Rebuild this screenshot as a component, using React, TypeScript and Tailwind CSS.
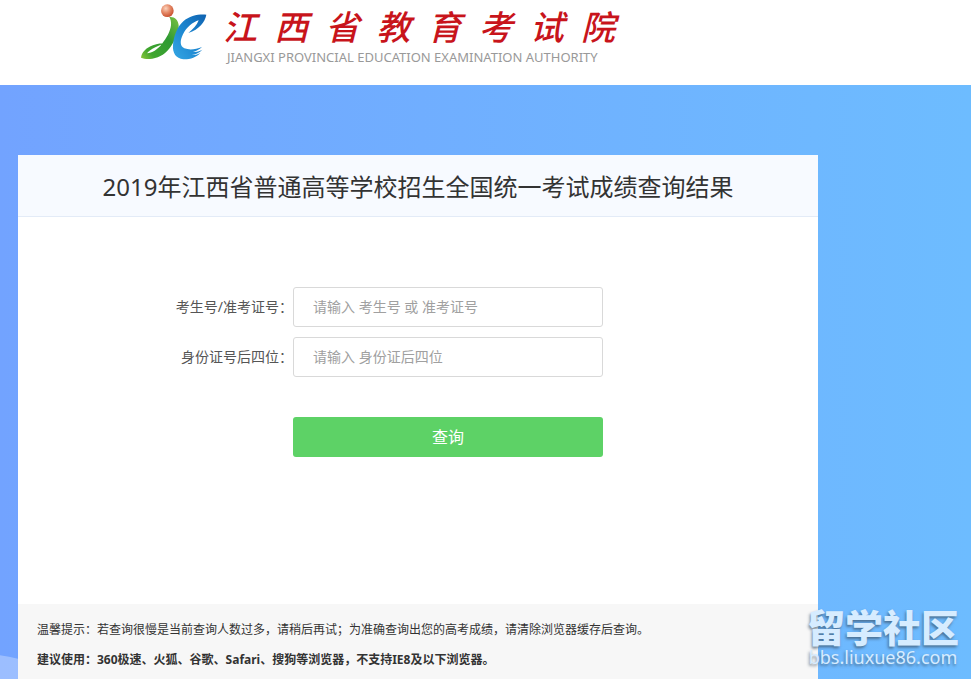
import React from 'react';

interface FieldProps {
  id: string;
  label: string;
  placeholder: string;
}

const Logo: React.FC = () => (
  <svg viewBox="34 12 198 168" className="w-[66px] h-14 shrink-0" aria-hidden="true">
    <defs>
      <radialGradient id="ball" cx="0.38" cy="0.32" r="0.7">
        <stop offset="0" stopColor="#fbd3bd" />
        <stop offset="0.5" stopColor="#e58a68" />
        <stop offset="1" stopColor="#c9502f" />
      </radialGradient>
      <linearGradient id="green" x1="1" y1="0" x2="0" y2="1">
        <stop offset="0" stopColor="#7cc143" />
        <stop offset="0.4" stopColor="#2f9a33" />
        <stop offset="0.8" stopColor="#3fa52e" />
        <stop offset="1" stopColor="#8cc63c" />
      </linearGradient>
      <linearGradient id="blue" x1="1" y1="0" x2="0" y2="1">
        <stop offset="0" stopColor="#0f62b0" />
        <stop offset="0.5" stopColor="#1c86d0" />
        <stop offset="1" stopColor="#35a7e4" />
      </linearGradient>
    </defs>
    <path
      d="M119 51 C134 49 146 60 147 76 C148 98 137 120 124 139 C110 160 91 173 68 176 C55 178 43 177 34 173 C36 158 49 143 70 136 C83 131 97 129 109 129 C86 136 62 147 52 160 C67 159 84 149 96 133 C111 114 122 94 124 76 C125 66 123 58 119 51 Z"
      fill="url(#green)"
    />
    <path
      d="M230 44 C226 66 209 88 176 99 C190 88 202 75 207 61 C190 66 170 82 160 103 C150 123 151 139 164 145 C180 151 199 148 217 141 C209 149 200 153 190 156 C201 156 210 153 218 149 C210 158 198 163 186 165 C196 166 205 163 212 159 C200 172 180 179 161 178 C139 176 128 159 130 136 C132 111 141 82 161 64 C180 47 207 42 230 44 Z"
      fill="url(#blue)"
    />
    <circle cx="113" cy="32" r="19" fill="url(#ball)" />
  </svg>
);

const Field: React.FC<FieldProps> = ({ id, label, placeholder }) => (
  <div className="flex items-center">
    <label htmlFor={id} className="w-[275px] text-right text-sm text-[#555]">
      {label}
    </label>
    <input
      id={id}
      type="text"
      placeholder={placeholder}
      className="w-[310px] h-10 px-[19px] pb-[2px] text-sm border border-[#d9d9d9] rounded-[3px] bg-white outline-none placeholder:text-[#a0a0a0]"
    />
  </div>
);

const App: React.FC = () => {
  const schoolName = '江西省教育考试院'.split('');

  return (
    <div className="relative min-h-screen flex flex-col overflow-hidden bg-white text-[#333] font-['Noto_Sans','Noto_Sans_CJK_SC',sans-serif]">
      {/* Brand */}
      <header className="flex h-[85px] pt-1 pl-[141px] gap-4">
        <Logo />
        <div className="w-[392px]">
          <h1 className="flex justify-between pt-px text-[34px] leading-11 italic font-medium text-[#c8141b]">
            {schoolName.map((char, i) => (
              <span key={i}>{char}</span>
            ))}
          </h1>
          <p className="text-[13px] leading-4 whitespace-nowrap text-[#999] pl-1">
            JIANGXI PROVINCIAL EDUCATION EXAMINATION AUTHORITY
          </p>
        </div>
      </header>

      <main className="relative flex-1 flex flex-col pt-[70px] pl-[18px] overflow-hidden bg-linear-to-r from-[#72a3ff] to-[#6dbcff]">
        <div className="absolute -left-[230px] -bottom-[374px] w-[400px] h-[400px] rounded-full bg-white/30" />

        <section className="relative flex-1 flex flex-col w-full max-w-[800px] bg-white">
          <h2 className="pt-[13px] pb-[11px] text-2xl leading-[37px] text-center bg-[#f7faff] border-b border-[#e3ebf7]">
            2019年江西省普通高等学校招生全国统一考试成绩查询结果
          </h2>

          <form className="flex-1 flex flex-col gap-[10px] pt-[70px]" onSubmit={(e) => e.preventDefault()}>
            <Field id="candidate" label="考生号/准考证号：" placeholder="请输入 考生号 或 准考证号" />
            <Field id="idcard" label="身份证号后四位：" placeholder="请输入 身份证后四位" />
            <button
              type="submit"
              className="w-[310px] h-10 mt-[30px] ml-[275px] rounded-[3px] bg-[#5dd266] text-base text-white"
            >
              查询
            </button>
          </form>

          {/* Tips */}
          <div className="px-[19px] pt-[11px] pb-1 text-xs leading-[30px] bg-[#f7f7f7]">
            <p>温馨提示：若查询很慢是当前查询人数过多，请稍后再试；为准确查询出您的高考成绩，请清除浏览器缓存后查询。</p>
            <p className="font-bold">建议使用：360极速、火狐、谷歌、Safari、搜狗等浏览器，不支持IE8及以下浏览器。</p>
          </div>
        </section>
      </main>

      {/* Watermark */}
      <div className="absolute right-3 bottom-3 text-center text-[#d6ecff] [text-shadow:-1px_2px_3px_rgba(60,80,100,0.7)]">
        <p className="text-[38px] leading-10 font-black">留学社区</p>
        <p className="text-lg leading-5">bbs.liuxue86.com</p>
      </div>
    </div>
  );
};

export default App;
